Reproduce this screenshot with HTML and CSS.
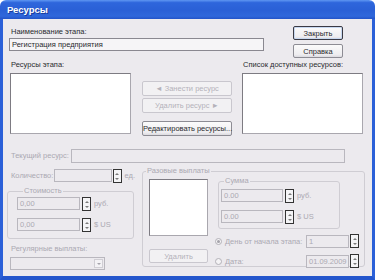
FILE: index.html
```html
<!DOCTYPE html>
<html lang="ru">
<head>
    <meta charset="UTF-8">
    <title>Ресурсы</title>
    <link rel="stylesheet" href="styles.css">
</head>
<body>
    <div class="window">
        <div class="titlebar"><span class="title">Ресурсы</span></div>
        <div class="client">

            <div class="row-top">
                <div class="stage">
                    <div class="label">Наименование этапа:</div>
                    <div class="field stage-name">Регистрация предприятия</div>
                </div>
                <div class="side-buttons">
                    <button class="btn default">Закрыть</button>
                    <button class="btn">Справка</button>
                </div>
            </div>

            <div class="row-lists">
                <div class="list-col">
                    <div class="label">Ресурсы этапа:</div>
                    <div class="listbox"></div>
                </div>
                <div class="mid-buttons">
                    <button class="btn disabled">&#9668; Занести ресурс</button>
                    <button class="btn disabled">Удалить ресурс &#9658;</button>
                    <button class="btn edit">Редактировать ресурсы...</button>
                </div>
                <div class="list-col avail">
                    <div class="label">Список доступных ресурсов:</div>
                    <div class="listbox"></div>
                </div>
            </div>

            <div class="row-current">
                <div class="label off current-label">Текущий ресурс:</div>
                <div class="field off current-field"></div>
            </div>

            <div class="row-bottom">
                <div class="left-col">
                    <div class="qty-row">
                        <div class="label off qty-label">Количество:</div>
                        <div class="field off qty-field"></div>
                        <div class="spin"><span class="up"></span><span class="down"></span></div>
                        <div class="unit off">ед.</div>
                    </div>

                    <fieldset class="group cost">
                        <legend class="off">Стоимость</legend>
                        <div class="money-row">
                            <div class="field off money">0,00</div>
                            <div class="spin"><span class="up"></span><span class="down"></span></div>
                            <div class="unit off">руб.</div>
                        </div>
                        <div class="money-row">
                            <div class="field off money">0,00</div>
                            <div class="spin"><span class="up"></span><span class="down"></span></div>
                            <div class="unit off">$ US</div>
                        </div>
                    </fieldset>

                    <div class="label off regular-label">Регулярные выплаты:</div>
                    <div class="combo"><span class="combo-btn"></span></div>
                </div>

                <fieldset class="group once">
                    <legend class="off">Разовые выплаты</legend>
                    <div class="once-inner">
                        <div class="once-list-col">
                            <div class="listbox once-list"></div>
                            <button class="btn disabled once-del">Удалить</button>
                        </div>
                        <div class="once-right">
                            <fieldset class="group sum">
                                <legend class="off">Сумма</legend>
                                <div class="money-row">
                                    <div class="field off money">0.00</div>
                                    <div class="spin"><span class="up"></span><span class="down"></span></div>
                                    <div class="unit off">руб.</div>
                                </div>
                                <div class="money-row">
                                    <div class="field off money">0.00</div>
                                    <div class="spin"><span class="up"></span><span class="down"></span></div>
                                    <div class="unit off">$ US</div>
                                </div>
                            </fieldset>
                            <div class="radio-row first">
                                <span class="radio checked"></span>
                                <span class="radio-text off">День от начала этапа:</span>
                                <div class="field off day">1</div>
                                <div class="spin"><span class="up"></span><span class="down"></span></div>
                            </div>
                            <div class="radio-row">
                                <span class="radio"></span>
                                <span class="radio-text off">Дата:</span>
                                <div class="field off day">01.09.2009</div>
                                <div class="spin"><span class="up"></span><span class="down"></span></div>
                            </div>
                        </div>
                    </div>
                </fieldset>
            </div>

        </div>
    </div>
</body>
</html>
```

FILE: styles.css
```css
* {
    box-sizing: border-box;
}
body {
    margin: 0;
    font-family: 'Liberation Sans', Arial, sans-serif;
    font-size: 7.5px;
    color: #2a2a2e;
    background-color: #fff;
}
.window {
    width: 375px;
    height: 280px;
    display: flex;
    flex-direction: column;
}
.titlebar {
    height: 19px;
    border-radius: 6px 6px 0 0;
    background: linear-gradient(to bottom, #5f97f2 0%, #2e66dc 14%, #2a60d6 55%, #2f67db 85%, #2253c8 100%);
    padding-left: 7px;
    display: flex;
    align-items: center;
}
.title {
    color: #fff;
    font-weight: bold;
    font-size: 9.5px;
    text-shadow: 1px 1px 0 #1a3c9c;
}
.client {
    flex: 1;
    background-color: #eceaee;
    border-left: 3px solid #2b60d8;
    border-right: 3px solid #2b60d8;
    border-bottom: 4px solid #2456cc;
}

/* common controls */
.label {
    line-height: 12px;
    white-space: nowrap;
}
.off {
    color: #aba9b2;
}
.field {
    height: 14px;
    border: 1px solid #8a8890;
    background-color: #f6f5f7;
    line-height: 12px;
    padding-left: 2px;
    white-space: nowrap;
    overflow: hidden;
}
.field.off {
    border-color: #b9b7be;
    background-color: #eceaee;
}
.listbox {
    background-color: #fff;
    border: 1px solid #a9a7ae;
    border-top-color: #7d7b82;
    border-left-color: #7d7b82;
}
.btn {
    display: block;
    height: 15px;
    padding: 0;
    font-family: inherit;
    font-size: 7.5px;
    color: #2a2a2e;
    background: linear-gradient(to bottom, #fbfbfb, #eeedf0 80%, #dcdbe0);
    border: 1px solid #8d8c94;
    border-radius: 2px;
    white-space: nowrap;
}
.btn.default {
    border-color: #3a3a44;
    box-shadow: inset 0 0 0 1px #c8d8f0;
}
.btn.disabled {
    color: #b4b2ba;
    border-color: #c9c7ce;
    background: #f2f1f3;
}
.spin {
    width: 9px;
    height: 14px;
    border: 1px solid #333;
    background-color: #f4f4f6;
    display: flex;
    flex-direction: column;
    justify-content: space-around;
    align-items: center;
    padding: 1px 0;
}
.spin span {
    width: 0;
    height: 0;
    border-left: 2px solid transparent;
    border-right: 2px solid transparent;
}
.spin .up {
    border-bottom: 2px solid #7a7a7a;
}
.spin .down {
    border-top: 2px solid #7a7a7a;
}
.unit {
    margin-left: 3px;
    line-height: 14px;
}
.group {
    margin: 0;
    padding: 0;
    border: 1px solid #cfcdd3;
    border-radius: 3px;
    min-width: 0;
}
.group legend {
    padding: 0 1px;
    line-height: 10px;
}

/* top row */
.row-top {
    display: flex;
    margin: 7px 0 0 6px;
}
.stage {
    width: 255px;
}
.stage .label {
    padding-left: 2px;
}
.stage-name {
    height: 13px;
}
.side-buttons {
    margin-left: 29px;
    width: 50px;
    display: flex;
    flex-direction: column;
    gap: 4px;
}
.side-buttons .btn {
    width: 50px;
    height: 14px;
}

/* lists row */
.row-lists {
    display: flex;
    margin-top: 1px;
}
.list-col {
    margin-left: 7px;
    width: 121px;
}
.list-col .label {
    padding-left: 1px;
}
.list-col .listbox {
    margin-top: 2px;
    height: 61px;
}
.mid-buttons {
    margin-left: 11px;
    width: 90px;
    padding-top: 22px;
    display: flex;
    flex-direction: column;
    gap: 2px;
}
.mid-buttons .btn {
    width: 90px;
}
.mid-buttons .edit {
    margin-top: 6px;
}
.list-col.avail {
    margin-left: 10px;
}

/* current resource */
.row-current {
    display: flex;
    margin-top: 13px;
}
.current-label {
    margin-left: 8px;
    width: 60px;
    line-height: 14px;
}
.current-field {
    width: 274px;
}

/* bottom area */
.row-bottom {
    display: flex;
    align-items: flex-start;
}
.left-col {
    margin-left: 4px;
    width: 128px;
}
.qty-row {
    display: flex;
    margin-top: 6px;
}
.qty-label {
    padding-left: 4px;
    width: 48px;
    line-height: 14px;
}
.qty-field {
    width: 58px;
    height: 13px;
}
.qty-row .spin {
    margin-left: 1px;
}
.cost {
    width: 127px;
    margin-top: 3px;
    padding: 0 0 6px 9px;
}
.cost legend {
    margin-left: 6px;
}
.money-row {
    display: flex;
    margin-top: 7px;
}
.money-row:first-of-type {
    margin-top: 1px;
}
.money {
    width: 63px;
    height: 13px;
}
.money-row .spin {
    margin-left: 2px;
}
.regular-label {
    padding-left: 4px;
    margin-top: 4px;
    line-height: 11px;
}
.combo {
    margin: 3px 0 0 3px;
    width: 95px;
    height: 13px;
    border: 1px solid #b9b7be;
    display: flex;
    justify-content: flex-end;
    padding: 1px;
}
.combo-btn {
    width: 9px;
    border: 1px solid #d0ced4;
    background-color: #f3f2f5;
    display: flex;
    align-items: center;
    justify-content: center;
}
.combo-btn::after {
    content: '';
    border-left: 2px solid transparent;
    border-right: 2px solid transparent;
    border-top: 2px solid #a5a3ab;
}

.once {
    margin: 3px 0 0 7px;
    width: 223px;
    height: 101px;
    padding: 0;
}
.once legend {
    margin-left: 3px;
}
.once-inner {
    display: flex;
}
.once-list-col {
    margin-left: 6px;
    width: 59px;
}
.once-list {
    margin-top: 3px;
    height: 57px;
}
.once-del {
    margin-top: 13px;
    width: 59px;
    height: 14px;
}
.once-right {
    margin-left: 6px;
}
.sum {
    margin-left: 4px;
    width: 122px;
    padding: 0 0 4px 2px;
}
.sum legend {
    margin-left: 3px;
}
.sum .money-row:first-of-type {
    margin-top: 3px;
}
.sum .money {
    width: 62px;
}
.radio-row {
    display: flex;
    align-items: center;
    margin-top: 6px;
}
.radio-row.first {
    margin-top: 5px;
}
.radio {
    width: 7px;
    height: 7px;
    border-radius: 50%;
    border: 1px solid #b3b1b8;
    background-color: #f4f3f5;
    margin-left: 1px;
    display: flex;
    align-items: center;
    justify-content: center;
}
.radio.checked::after {
    content: '';
    width: 3px;
    height: 3px;
    border-radius: 50%;
    background-color: #a4a2aa;
}
.radio-text {
    margin-left: 3px;
    width: 81px;
    white-space: nowrap;
}
.day {
    width: 43px;
    height: 13px;
}
.radio-row .spin {
    margin-left: 1px;
}
```
